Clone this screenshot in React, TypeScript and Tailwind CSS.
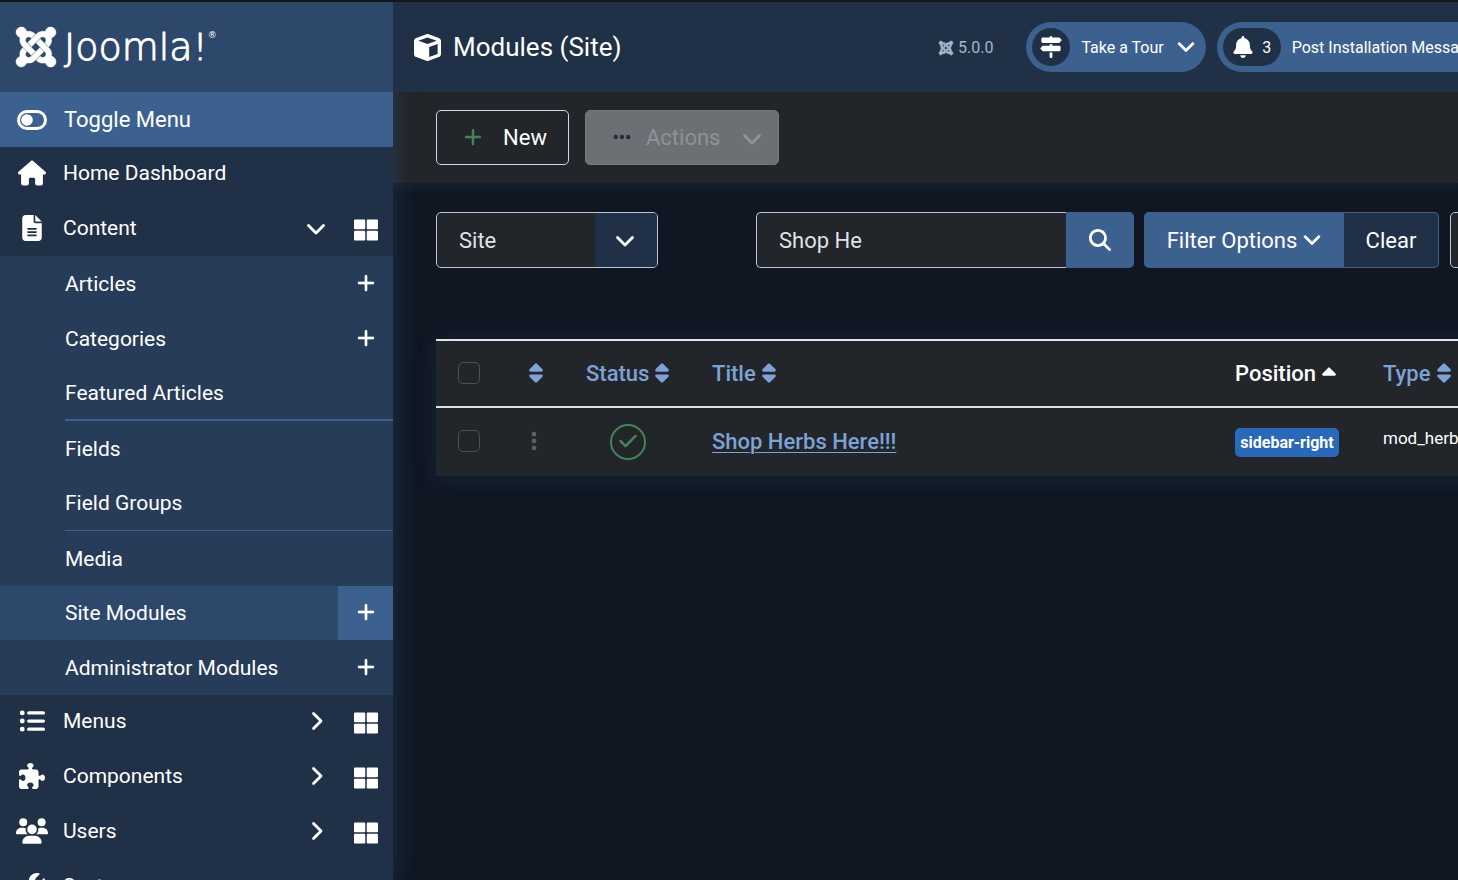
import type { ReactNode } from "react";
import type { IconType } from "react-icons";
import {
  FaBell,
  FaCheck,
  FaChevronDown,
  FaChevronRight,
  FaCube,
  FaEllipsis,
  FaEllipsisVertical,
  FaFileLines,
  FaHouse,
  FaJoomla,
  FaListUl,
  FaMagnifyingGlass,
  FaPlus,
  FaPuzzlePiece,
  FaSignsPost,
  FaSort,
  FaCaretUp,
  FaUsers,
  FaWrench,
} from "react-icons/fa6";
import { FaThLarge } from "react-icons/fa";
import { SiJoomla } from "react-icons/si";

type SubItem = { label: string; add?: boolean; divider?: "thick" | "thin"; active?: boolean };

const contentItems: SubItem[] = [
  { label: "Articles", add: true },
  { label: "Categories", add: true },
  { label: "Featured Articles", divider: "thick" },
  { label: "Fields" },
  { label: "Field Groups", divider: "thin" },
  { label: "Media" },
  { label: "Site Modules", add: true, active: true },
  { label: "Administrator Modules", add: true },
];

const lowerItems: { label: string; icon: IconType; size: number; dashboard: boolean }[] = [
  { label: "Menus", icon: FaListUl, size: 26, dashboard: true },
  { label: "Components", icon: FaPuzzlePiece, size: 26, dashboard: true },
  { label: "Users", icon: FaUsers, size: 32, dashboard: true },
  { label: "System", icon: FaWrench, size: 26, dashboard: false },
];

function ToggleIcon() {
  return (
    <svg width="30" height="20" viewBox="0 0 30 20" fill="none" aria-hidden="true">
      <rect x="1.5" y="1.5" width="27" height="17" rx="8.5" stroke="white" strokeWidth="3" />
      <circle cx="10" cy="10" r="5.8" fill="white" />
    </svg>
  );
}

function MenuRow({ icon, label, open, dashboard }: { icon: ReactNode; label: string; open?: boolean; dashboard?: boolean }) {
  return (
    <div className="flex h-[55px] items-center pb-[3px]">
      <a href="#" className="flex min-w-0 flex-1 items-center">
        <span className="flex w-[63px] shrink-0 justify-center">{icon}</span>
        <span className="flex-1">{label}</span>
        {dashboard && (open ? <FaChevronDown size={20} strokeWidth={8} /> : <FaChevronRight size={20} strokeWidth={8} />)}
      </a>
      {dashboard && (
        <a href="#" aria-label={`${label} Dashboard`} className="ml-3 flex w-[55px] justify-center pt-1">
          <FaThLarge size={24} />
        </a>
      )}
    </div>
  );
}

function Sidebar() {
  return (
    <aside className="z-10 flex w-[393px] shrink-0 flex-col bg-[#203046] shadow-[0_0_24px_rgba(50,95,130,0.4)]">
      <a href="#" aria-label="Joomla!" className="flex h-[90px] shrink-0 items-center gap-2 bg-[#2d486b] pl-4">
        <SiJoomla size={40} className="overflow-visible" stroke="white" strokeWidth={0.3} />
        <span className="flex items-start font-['DejaVu_Sans'] text-[38px] leading-10 font-extralight">
          <span className="[-webkit-text-stroke:1px_white]">Joomla!</span>
          <span className="text-[9px] leading-4 font-normal">®</span>
        </span>
      </a>
      <button type="button" className="flex h-[55px] shrink-0 items-center bg-[#3d618f] text-left">
        <span className="flex w-16 shrink-0 justify-center">
          <ToggleIcon />
        </span>
        Toggle Menu
      </button>
      <nav aria-label="Main menu" className="text-[21px]">
        <MenuRow icon={<FaHouse size={28} />} label="Home Dashboard" />
        <MenuRow icon={<FaFileLines size={26} />} label="Content" open dashboard />
        <ul className="-mt-px bg-[#273c58]">
          {contentItems.map((item) => (
            <li key={item.label} className={item.active ? "flex h-[54px] bg-[#2d486b]" : "flex h-[55px]"}>
              <a
                href="#"
                className={
                  "ml-[65px] flex flex-1 items-center border-[#3d618f] " +
                  (item.divider === "thick" ? "border-b-2" : item.divider === "thin" ? "border-b" : "")
                }
              >
                {item.label}
              </a>
              {item.add && (
                <a
                  href="#"
                  aria-label={`Add to ${item.label}`}
                  className={"flex w-[55px] items-center justify-center pb-[2px] " + (item.active ? "bg-[#3d618f]" : "")}
                >
                  <FaPlus size={20} strokeWidth={4} />
                </a>
              )}
            </li>
          ))}
        </ul>
        {lowerItems.map(({ label, icon: Icon, size, dashboard }) => (
          <MenuRow key={label} icon={<Icon size={size} />} label={label} dashboard={dashboard} />
        ))}
      </nav>
    </aside>
  );
}

function Header() {
  return (
    <header className="relative z-20 flex h-[90px] shrink-0 items-center bg-[#203046] pl-[21px] whitespace-nowrap">
      <h1 className="flex w-[524px] shrink-0 items-center gap-3 text-[26px]">
        <FaCube size={27} />
        Modules (Site)
      </h1>
      <div className="flex shrink-0 items-center gap-1 pt-px text-base text-[#a9b6c6]">
        <FaJoomla size={16} stroke="currentColor" strokeWidth={16} />
        5.0.0
      </div>
      <button type="button" className="ml-[33px] flex h-[50px] shrink-0 items-center rounded-full bg-[#3d618f] px-[6px] text-base">
        <span className="flex size-[38px] items-center justify-center rounded-full bg-[#203046]">
          <FaSignsPost size={22} />
        </span>
        <span className="mr-[13px] ml-[11px] pt-[2px]">Take a Tour</span>
        <FaChevronDown size={18} strokeWidth={24} className="mr-[5px] mb-[2px] overflow-visible" />
      </button>
      <a href="#" className="ml-[11px] flex h-[50px] shrink-0 items-center rounded-full bg-[#3d618f] px-[6px] text-base">
        <span className="mr-[11px] flex h-[38px] w-[58px] items-center justify-center gap-2 rounded-full bg-[#203046]">
          <FaBell size={22} />
          <span className="pt-[2px]">3</span>
        </span>
        <span className="pt-[2px] pr-4">Post Installation Messages</span>
      </a>
    </header>
  );
}

function Toolbar() {
  return (
    <div className="flex h-[91px] shrink-0 items-center gap-4 bg-[#222529] pl-[43px] shadow-[0_0_14px_rgba(50,95,130,0.3)]">
      <button type="button" className="flex h-[55px] w-[133px] items-center justify-between rounded-[5px] border border-[#ced9e8] pr-[21px] pl-[26px]">
        <FaPlus size={20} className="mb-[2px] text-[#448355]" />
        New
      </button>
      <button
        type="button"
        disabled
        className="flex h-[55px] w-[194px] items-center rounded-[5px] border border-[#75797d] bg-[#6c6f74] pl-[26px] text-[#8f9296]"
      >
        <FaEllipsis size={20} className="mb-[2px] text-[#202f3d]" />
        <span className="mr-[22px] ml-[14px]">Actions</span>
        <FaChevronDown size={20} strokeWidth={8} />
      </button>
    </div>
  );
}

function Filters() {
  return (
    <div className="flex pt-[29px] whitespace-nowrap">
      <div className="relative h-14 w-[222px] shrink-0">
        <select aria-label="Client" className="size-full appearance-none rounded-[5px] border border-[#b5c8e0] bg-[#222529] pt-[2px] pl-[22px] text-[#dfe3e7]">
          <option>Site</option>
          <option>Administrator</option>
        </select>
        <span className="pointer-events-none absolute inset-y-px right-px flex w-[62px] items-center justify-center rounded-r bg-[#203046] pr-[3px]">
          <FaChevronDown size={20} strokeWidth={8} />
        </span>
      </div>
      <div className="ml-[98px] flex shrink-0">
        <input
          type="text"
          aria-label="Search"
          defaultValue="Shop He"
          className="h-14 w-[310px] rounded-l-[5px] border border-r-0 border-[#b5c8e0] bg-[#222529] pl-[22px] text-[#dfe3e7] outline-none"
        />
        <button type="button" aria-label="Search" className="flex h-14 w-[68px] items-center justify-center rounded-r-[5px] bg-[#3d618f]">
          <FaMagnifyingGlass size={22} />
        </button>
      </div>
      <div className="ml-[10px] flex shrink-0">
        <button type="button" className="flex h-14 w-[200px] items-center justify-center gap-[6px] rounded-l-[5px] bg-[#3d618f] pt-px">
          Filter Options
          <FaChevronDown size={18} strokeWidth={24} className="mb-1 overflow-visible" />
        </button>
        <button type="button" className="h-14 w-[95px] rounded-r-[5px] border border-l-0 border-[#3d618f] bg-[#203046] pt-[2px]">
          Clear
        </button>
      </div>
      <select
        aria-label="Sort by"
        className="ml-[11px] h-14 w-[300px] shrink-0 appearance-none rounded-[5px] border border-[#b5c8e0] bg-[#222529] pl-[22px]"
      >
        <option>Position ascending</option>
      </select>
    </div>
  );
}

function SortLink({ label, active }: { label: string; active?: boolean }) {
  return (
    <a href="#" aria-label={label || "Ordering"} className={"flex items-center gap-[2px] " + (active ? "text-white" : "text-[#7ea2d6]")}>
      {label}
      {active ? <FaCaretUp size={22} className="mb-[2px]" /> : <FaSort size={22} className="mb-[2px]" />}
    </a>
  );
}

const checkboxClass = "block size-[22px] appearance-none rounded-[5px] border border-[#4d5054] bg-transparent";

function ModulesTable() {
  return (
    <table className="mt-[71px] w-[1160px] table-fixed border-collapse bg-[#222529] text-left shadow-[0_4px_20px_rgba(50,95,130,0.2)]">
      <colgroup>
        <col className="w-[66px]" />
        <col className="w-[68px]" />
        <col className="w-[126px]" />
        <col className="w-[523px]" />
        <col className="w-[148px]" />
        <col />
      </colgroup>
      <thead>
        <tr className="h-[67px] border-y-2 border-[#dfe3e7]">
          <th className="pb-[2px] pl-[22px]">
            <input type="checkbox" aria-label="Check all items" className={checkboxClass} />
          </th>
          <th className="pl-[23px] font-medium">
            <SortLink label="" />
          </th>
          <th className="pl-4 font-medium">
            <SortLink label="Status" />
          </th>
          <th className="pl-4 font-medium">
            <SortLink label="Title" />
          </th>
          <th className="pl-4 font-medium">
            <SortLink label="Position" active />
          </th>
          <th className="pl-4 font-medium">
            <SortLink label="Type" />
          </th>
        </tr>
      </thead>
      <tbody>
        <tr className="h-[69px]">
          <td className="pb-[2px] pl-[22px]">
            <input type="checkbox" aria-label="Select Shop Herbs Here!!!" className={checkboxClass} />
          </td>
          <td className="pb-[2px] pl-[21px]">
            <FaEllipsisVertical size={22} className="text-[#5d6063]" />
          </td>
          <td className="pl-10">
            <button
              type="button"
              aria-label="Published"
              className="flex size-9 items-center justify-center rounded-full border-2 border-[#448355] pb-[2px] text-[#448355]"
            >
              <FaCheck size={20} />
            </button>
          </td>
          <td className="pl-4 font-medium">
            <a href="#" className="text-[#7ea2d6] underline decoration-1 underline-offset-3">
              Shop Herbs Here!!!
            </a>
          </td>
          <td className="pl-4">
            <span className="flex h-[29px] w-[104px] items-center justify-center rounded-[5px] bg-[#2a69b8] pt-[2px] text-base font-bold">
              sidebar-right
            </span>
          </td>
          <td className="pb-2 pl-4 text-[17px]">mod_herbs</td>
        </tr>
      </tbody>
    </table>
  );
}

export default function App() {
  return (
    <div className="flex h-screen overflow-hidden border-t-2 border-[#15171b] bg-[#101723] font-[Roboto,sans-serif] text-[22px] leading-7 text-white">
      <Sidebar />
      <div className="flex min-w-0 flex-1 flex-col">
        <Header />
        <Toolbar />
        <main className="flex-1 overflow-hidden pl-[43px]">
          <Filters />
          <ModulesTable />
        </main>
      </div>
    </div>
  );
}
